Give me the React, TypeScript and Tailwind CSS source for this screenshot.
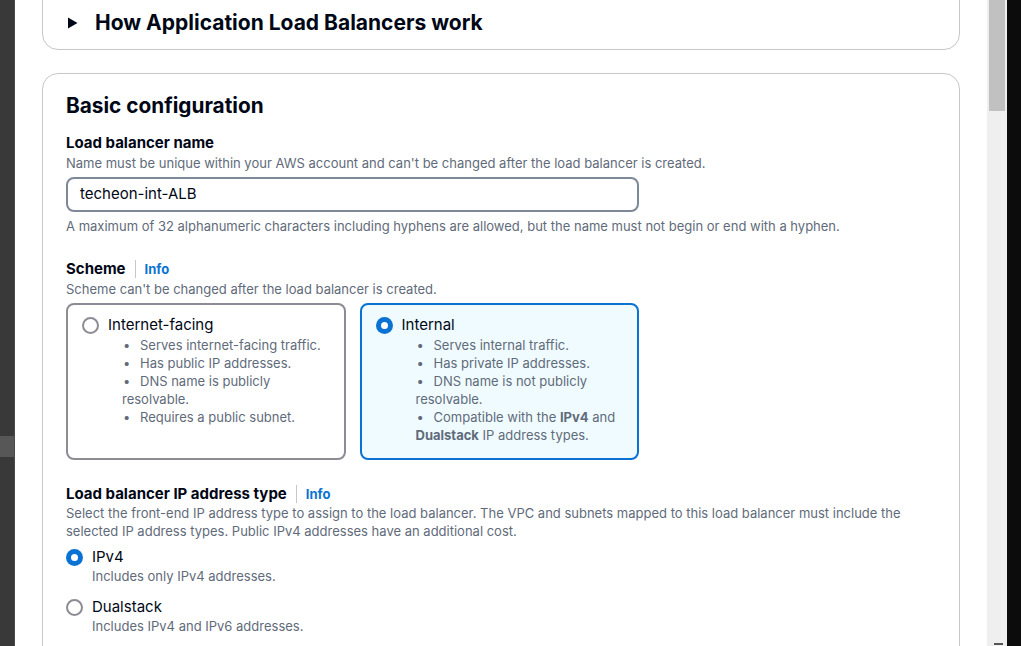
import React, { useState } from "react";

const font = { fontFamily: "Inter, 'Liberation Sans', sans-serif" };

function Radio({ checked }: { checked: boolean }) {
  return checked ? (
    <span className="inline-flex h-[17px] w-[17px] shrink-0 items-center justify-center rounded-full bg-[#0972d3]">
      <span className="h-[7px] w-[7px] rounded-full bg-white" />
    </span>
  ) : (
    <span className="inline-block h-[17px] w-[17px] shrink-0 rounded-full border-2 border-[#8c8c94] bg-white" />
  );
}

function Label({ children, info }: { children: React.ReactNode; info?: boolean }) {
  return (
    <div className="flex items-center text-[15px] font-bold leading-[20px] text-[#000716]">
      <span>{children}</span>
      {info && (
        <>
          <span className="ml-[9px] h-[18px] w-px bg-[#c6c6cd]" />
          <a className="pl-[9px] text-[13px] font-bold text-[#0972d3]">Info</a>
        </>
      )}
    </div>
  );
}

function Desc({ children }: { children: React.ReactNode }) {
  return <p className="text-[13px] leading-[18px] text-[#5f6b7a]">{children}</p>;
}

type Tile = { id: string; title: string; points: React.ReactNode[] };

const tiles: Tile[] = [
  {
    id: "internet",
    title: "Internet-facing",
    points: [
      "Serves internet-facing traffic.",
      "Has public IP addresses.",
      "DNS name is publicly resolvable.",
      "Requires a public subnet.",
    ],
  },
  {
    id: "internal",
    title: "Internal",
    points: [
      "Serves internal traffic.",
      "Has private IP addresses.",
      "DNS name is not publicly resolvable.",
      <>
        Compatible with the <b className="font-bold">IPv4</b> and <b className="font-bold">Dualstack</b> IP address
        types.
      </>,
    ],
  },
];

export default function App() {
  const [scheme, setScheme] = useState("internal");
  const [ipType, setIpType] = useState("ipv4");

  return (
    <div className="flex h-[646px] w-[1021px] overflow-hidden bg-white" style={font}>
      {/* left dark strip */}
      <div className="flex w-[15px] shrink-0 flex-col border-r border-[#4a4a4a] bg-[#393939]">
        <div className="mt-[436px] h-[21px] bg-[#575757]" />
      </div>

      {/* page content */}
      <div className="flex-1 overflow-hidden pl-[27px] pr-[27px]">
        {/* collapsed expandable section */}
        <div className="-mt-[20px] flex items-center gap-[17px] rounded-b-[16px] border border-[#c6c6cd] px-[24px] pb-[14px] pt-[30px]">
          <svg width="11" height="12" viewBox="0 0 11 12" className="shrink-0">
            <path d="M1 0.5 L10.5 6 L1 11.5 Z" fill="#000716" />
          </svg>
          <h2 className="text-[21px] font-bold leading-[24px] text-[#000716]">How Application Load Balancers work</h2>
        </div>

        {/* Basic configuration */}
        <div className="mt-[23px] rounded-[16px] border border-[#c6c6cd] px-[23px] pb-[40px] pt-[20px]">
          <h2 className="text-[20.8px] font-bold leading-[24px] text-[#000716]">Basic configuration</h2>

          <div className="mt-[15px]">
            <Label>Load balancer name</Label>
            <div className="mt-[1px]">
              <Desc>
                Name must be unique within your AWS account and can't be changed after the load balancer is created.
              </Desc>
            </div>
            <div className="mt-[5px] flex h-[35px] w-[573px] items-center rounded-[8px] border-2 border-[#7d8998] px-[12px] text-[15px] text-[#000716]">
              techeon-int-ALB
            </div>
            <div className="mt-[5px]">
              <Desc>
                A maximum of 32 alphanumeric characters including hyphens are allowed, but the name must not begin or
                end with a hyphen.
              </Desc>
            </div>
          </div>

          <div className="mt-[24px]">
            <Label info>Scheme</Label>
            <div className="mt-[1px]">
              <Desc>Scheme can't be changed after the load balancer is created.</Desc>
            </div>
            <div className="mt-[5px] grid w-[573px] grid-cols-2 gap-[14px]">
              {tiles.map((t) => {
                const on = scheme === t.id;
                return (
                  <div
                    key={t.id}
                    onClick={() => setScheme(t.id)}
                    className={`h-[157px] cursor-pointer rounded-[8px] border-2 px-[14px] pt-[10px] ${
                      on ? "border-[#0972d3] bg-[#f0fbff]" : "border-[#8c8c94] bg-white"
                    }`}
                  >
                    <div className="flex items-center gap-[9px]">
                      <Radio checked={on} />
                      <span className="text-[15px] leading-[20px] text-[#000716]">{t.title}</span>
                    </div>
                    <ul className="ml-[40px] mt-[1px] text-[13px] leading-[18px] text-[#5f6b7a]">
                      {t.points.map((p, i) => (
                        <li key={i}>
                          <span className="inline-block w-[18px] pl-[1px]">•</span>
                          {p}
                        </li>
                      ))}
                    </ul>
                  </div>
                );
              })}
            </div>
          </div>

          <div className="mt-[24px]">
            <Label info>Load balancer IP address type</Label>
            <Desc>
              Select the front-end IP address type to assign to the load balancer. The VPC and subnets mapped to this
              load balancer must include the selected IP address types. Public IPv4 addresses have an additional cost.
            </Desc>
            <div className="mt-[7px] flex flex-col gap-[12px]">
              {[
                { id: "ipv4", title: "IPv4", sub: "Includes only IPv4 addresses." },
                { id: "dual", title: "Dualstack", sub: "Includes IPv4 and IPv6 addresses." },
              ].map((o) => (
                <div key={o.id} className="cursor-pointer" onClick={() => setIpType(o.id)}>
                  <div className="flex items-center gap-[9px]">
                    <Radio checked={ipType === o.id} />
                    <span className="text-[15px] leading-[20px] text-[#000716]">{o.title}</span>
                  </div>
                  <div className="pl-[26px]">
                    <Desc>{o.sub}</Desc>
                  </div>
                </div>
              ))}
            </div>
          </div>
        </div>
      </div>

      {/* scrollbar */}
      <div className="flex w-[20px] shrink-0 flex-col bg-[#efefef] px-[2px]">
        <div className="h-[111px] bg-[#c1c1c1]" />
        <div className="mt-auto mb-[1px] ml-[5px] h-[2px] w-[9px] bg-[#555]" />
      </div>

      {/* right dark strip */}
      <div className="w-[14px] shrink-0 bg-[#0c0c0c]" />
    </div>
  );
}
